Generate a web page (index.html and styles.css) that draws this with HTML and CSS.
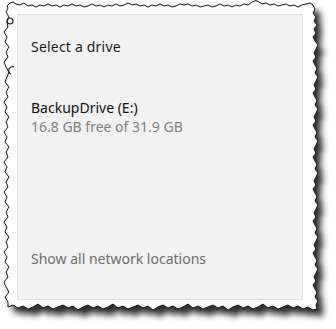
FILE: index.html
```html
<!DOCTYPE html>
<html>
<head>
<meta charset="utf-8">
<link rel="stylesheet" href="styles.css">
</head>
<body>
<div class="frame">
  <svg class="torn" width="336" height="329" viewBox="0 0 336 329" aria-hidden="true">
    <defs>
      <filter id="blur" x="-10%" y="-10%" width="120%" height="120%">
        <feGaussianBlur stdDeviation="3"/>
      </filter>
      <path id="edge" d="M7,6 L10,3 13,2 16,4 20,5 24,3 28,6 32,5 36,7 40,5 44,6 48,4 52,6 56,5 60,7 64,5 68,6 72,4 76,6 80,5 84,7 88,6 92,4 96,6 100,5 104,7 108,5 112,6 116,4 120,6 124,5 128,3 132,5 136,4 140,6 144,5 148,7 152,5 156,6 160,4 164,6 168,5 172,7 176,6 180,4 184,5 188,4 192,6 196,5 200,7 204,6 208,5 212,7 216,6 220,4 224,6 228,5 232,7 236,5 240,6 244,4 248,5 252,2 256,0.5 259,2 262,4 266,3 270,5 274,4 278,6 282,5 286,4 290,6 294,5 298,7 302,5 306,4 310,3 313,5 315,9 313,13 316,17 314,21 317,25 314,29 316,33 313,37 315,41 318,45 316,49 314,53 316,57 313,61 315,65 317,69 315,73 318,77 316,81 314,85 316,89 313,93 315,97 317,101 315,105 318,109 316,113 314,117 316,121 313,125 315,129 317,133 315,137 318,141 316,145 314,149 316,153 313,157 315,161 317,165 315,169 318,173 316,177 314,181 316,185 313,189 315,193 317,197 315,201 318,205 316,209 314,213 316,217 313,221 315,225 317,229 315,233 318,237 316,241 314,245 316,249 313,253 315,257 317,261 315,265 318,269 316,273 314,277 316,281 313,285 315,289 317,293 315,297 318,301 316,305 317,309 313,310 308,307 303,309 298,306 293,308 288,305 283,307 278,309 273,306 268,308 263,304 258,307 253,309 248,306 243,308 238,305 233,307 228,310 223,306 218,308 213,305 208,307 203,309 198,306 193,308 188,304 183,307 178,309 173,306 168,308 163,305 158,307 153,310 148,306 143,308 138,305 133,307 128,309 123,306 118,308 113,304 108,307 103,309 98,306 93,308 88,305 83,307 78,310 73,306 68,308 63,305 58,307 53,309 48,306 43,308 38,304 33,307 28,309 23,306 18,308 13,305 8,307 8,302 5,297 9,292 6,287 4,282 8,277 6,272 9,267 5,262 7,257 4,252 8,247 6,242 9,237 5,232 7,227 4,222 8,217 6,212 9,207 5,202 7,197 4,192 8,187 6,182 9,177 5,172 7,167 4,162 8,157 6,152 9,147 5,142 7,137 4,132 8,127 6,122 9,117 5,112 7,107 4,102 8,97 6,92 9,87 5,82 7,77 9,72 6,67 4,62 8,57 6,52 9,47 5,42 7,37 4,32 8,27 7,22 9,17 6,12 8,8 Z"/>
    </defs>
    <use href="#edge" class="shadow" transform="translate(6,7)" filter="url(#blur)"/>
    <use href="#edge" class="paper"/>
    <circle class="mark" cx="10" cy="21" r="3"/>
    <path class="mark" d="M14,67 A3.5,3.5 0 0 0 11,74"/>
  </svg>
  <div class="panel">
    <div class="title">Select a drive</div>
    <div class="drive">
      <div class="drive-name">BackupDrive (E:)</div>
      <div class="drive-size">16.8 GB free of 31.9 GB</div>
    </div>
    <div class="network">Show all network locations</div>
  </div>
</div>
</body>
</html>
```
FILE: styles.css
```css
html, body {
  margin: 0;
  padding: 0;
  background: #ffffff;
}
.frame {
  position: relative;
  width: 336px;
  height: 329px;
  padding: 14px 0 0 17px;
  box-sizing: border-box;
  font-family: "Noto Sans", "Open Sans", sans-serif;
}
.torn {
  position: absolute;
  left: 0;
  top: 0;
}
.shadow {
  fill: #2e2e2e;
}
.paper {
  fill: #ffffff;
  stroke: #111111;
  stroke-width: 1;
}
.mark {
  fill: none;
  stroke: #222;
  stroke-width: 1.2;
}
.panel {
  position: relative;
  width: 286px;
  height: 286px;
  box-sizing: border-box;
  background: #f2f2f2;
  border: 1px solid #e2e2e2;
  padding: 22px 12px 30px 13px;
  display: flex;
  flex-direction: column;
}
.title {
  font-size: 14px;
  line-height: 20px;
  color: #1a1a1a;
  letter-spacing: 0.2px;
}
.drive {
  margin-top: 41px;
  display: flex;
  flex-direction: column;
}
.drive-name {
  font-size: 14px;
  line-height: 19px;
  color: #111111;
}
.drive-size {
  font-size: 14px;
  line-height: 19px;
  color: #808080;
}
.network {
  margin-top: auto;
  font-size: 14px;
  line-height: 20px;
  color: #6e6e6e;
}
```
